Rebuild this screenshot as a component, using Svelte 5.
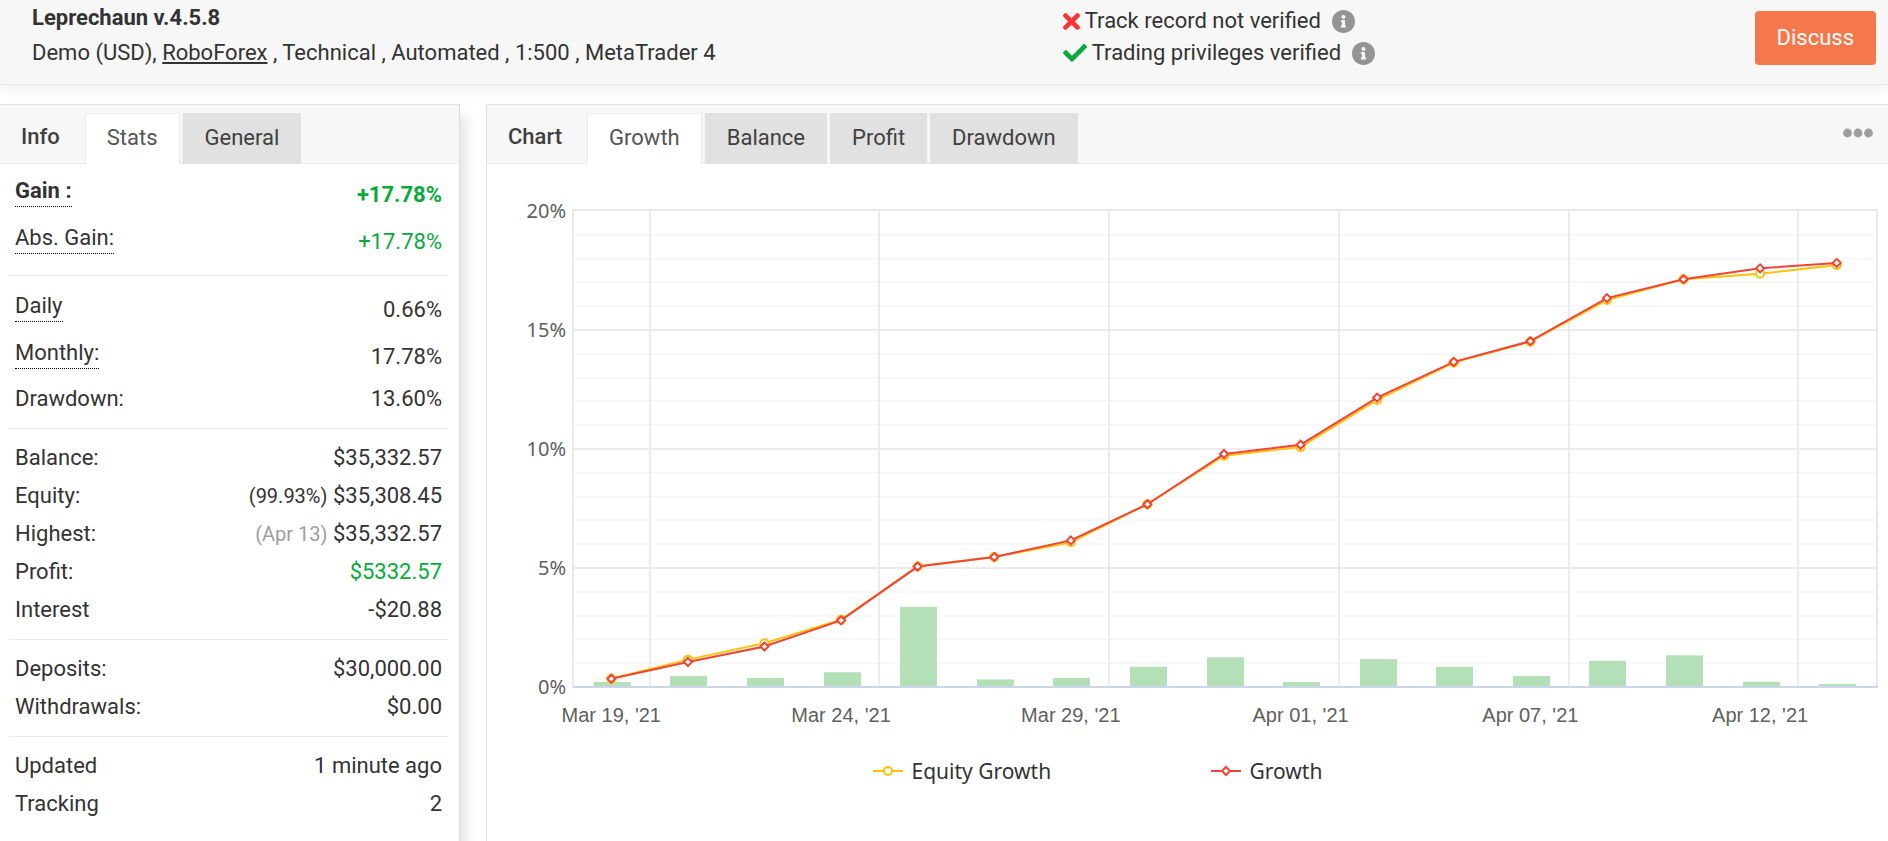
<script>
  const infoTabs = ['Stats', 'General'];
  const chartTabs = ['Growth', 'Balance', 'Profit', 'Drawdown'];
  let infoTab = $state('Stats');
  let chartTab = $state('Growth');

  const groups = [
    [
      { label: 'Gain :', value: '+17.78%', tip: true, strong: true, good: true },
      { label: 'Abs. Gain:', value: '+17.78%', tip: true, good: true }
    ],
    [
      { label: 'Daily', value: '0.66%', tip: true },
      { label: 'Monthly:', value: '17.78%', tip: true },
      { label: 'Drawdown:', value: '13.60%' }
    ],
    [
      { label: 'Balance:', value: '$35,332.57' },
      { label: 'Equity:', value: '$35,308.45', note: '(99.93%)' },
      { label: 'Highest:', value: '$35,332.57', note: '(Apr 13)', muted: true },
      { label: 'Profit:', value: '$5332.57', good: true },
      { label: 'Interest', value: '-$20.88' }
    ],
    [
      { label: 'Deposits:', value: '$30,000.00' },
      { label: 'Withdrawals:', value: '$0.00' }
    ],
    [
      { label: 'Updated', value: '1 minute ago' },
      { label: 'Tracking', value: '2' }
    ]
  ];

  const growth = [0.35, 1.05, 1.7, 2.8, 5.06, 5.46, 6.16, 7.68, 9.79, 10.18, 12.16, 13.66, 14.53, 16.34, 17.13, 17.59, 17.82];
  const equity = [0.35, 1.15, 1.84, 2.83, 5.06, 5.46, 6.08, 7.68, 9.72, 10.08, 12.06, 13.63, 14.51, 16.26, 17.13, 17.36, 17.73];
  const daily = [0.21, 0.46, 0.38, 0.62, 3.37, 0.32, 0.38, 0.85, 1.25, 0.21, 1.17, 0.85, 0.46, 1.1, 1.33, 0.22, 0.13];
  const dates = ["Mar 19, '21", "Mar 24, '21", "Mar 29, '21", "Apr 01, '21", "Apr 07, '21", "Apr 12, '21"];

  const left = 86;
  const top = 46;
  const bottom = 523;
  const unit = 23.8;
  const barWidth = 37;

  let width = $state(1401);
  let right = $derived(width - 11);
  let step = $derived((right - left - 2) / growth.length);

  const y = (v) => bottom - v * unit;
  const line = (values, s) => values.map((v, i) => `${left + s * (i + 0.5)},${y(v)}`).join(' ');
  const minor = Array.from({ length: 20 }, (_, i) => i).filter((i) => i % 5 !== 0);
</script>

{#snippet info(label)}
  <button class="info" aria-label={label}>
    <svg viewBox="8 8 496 496" width="23" height="23" fill="#949494"><path d="M256 8C119.043 8 8 119.083 8 256c0 136.997 111.043 248 248 248s248-111.003 248-248C504 119.083 392.957 8 256 8zm0 110c23.196 0 42 18.804 42 42s-18.804 42-42 42-42-18.804-42-42 18.804-42 42-42zm56 254c0 6.627-5.373 12-12 12h-88c-6.627 0-12-5.373-12-12v-24c0-6.627 5.373-12 12-12h12v-64h-12c-6.627 0-12-5.373-12-12v-24c0-6.627 5.373-12 12-12h64c6.627 0 12 5.373 12 12v100h12c6.627 0 12 5.373 12 12v24z" /></svg>
  </button>
{/snippet}

<div class="page">
  <header>
    <div class="account">
      <h1>Leprechaun v.4.5.8</h1>
      <p>Demo (USD), <a href="#roboforex">RoboForex</a> , Technical , Automated , 1:500 , MetaTrader 4</p>
    </div>
    <ul class="checks">
      <li>
        <svg viewBox="0 80 352 352" width="17" height="17" fill="#ff3232"><path d="M242.72 256l100.07-100.07c12.28-12.28 12.28-32.19 0-44.48l-22.24-22.24c-12.28-12.28-32.19-12.28-44.48 0L176 189.28 75.93 89.21c-12.28-12.28-32.19-12.28-44.48 0L9.21 111.45c-12.28 12.28-12.28 32.19 0 44.48L109.28 256 9.21 356.07c-12.28 12.28-12.28 32.19 0 44.48l22.24 22.24c12.28 12.28 32.2 12.28 44.48 0L176 322.72l100.07 100.07c12.28 12.28 32.2 12.28 44.48 0l22.24-22.24c12.28-12.28 12.28-32.19 0-44.48L242.72 256z" /></svg>
        <span>Track record not verified</span>
        {@render info('About track record')}
      </li>
      <li>
        <svg viewBox="0 64 512 384" width="24" height="18" fill="#07ab3c"><path d="M173.898 439.404l-166.4-166.4c-9.997-9.997-9.997-26.206 0-36.204l36.203-36.204c9.997-9.998 26.207-9.998 36.204 0L192 312.69 432.095 72.596c9.997-9.997 26.207-9.997 36.204 0l36.203 36.204c9.997 9.997 9.997 26.206 0 36.204l-294.4 294.401c-9.998 9.997-26.207 9.997-36.204-.001z" /></svg>
        <span>Trading privileges verified</span>
        {@render info('About trading privileges')}
      </li>
    </ul>
    <button class="discuss">Discuss</button>
  </header>

  <main>
    <section class="panel stats">
      <div class="tabs">
        <h2>Info</h2>
        {#each infoTabs as t}
          <button class="tab" class:active={infoTab === t} onclick={() => (infoTab = t)}>{t}</button>
        {/each}
      </div>
      <div class="groups">
        {#each groups as rows}
          <table>
            <tbody>
              {#each rows as r}
                <tr class:tip={r.tip} class:strong={r.strong}>
                  <th scope="row"><span>{r.label}</span></th>
                  <td class:good={r.good}>
                    {#if r.note}<small class:muted={r.muted}>{r.note}</small>{' '}{/if}{r.value}
                  </td>
                </tr>
              {/each}
            </tbody>
          </table>
        {/each}
      </div>
    </section>

    <section class="panel chart">
      <div class="tabs">
        <h2>Chart</h2>
        {#each chartTabs as t}
          <button class="tab" class:active={chartTab === t} onclick={() => (chartTab = t)}>{t}</button>
        {/each}
        <button class="more" aria-label="More options">
          <svg viewBox="0 0 30 10" width="30" height="10" fill="#9e9e9e">
            <circle cx="4.5" cy="5" r="4.4" /><circle cx="15" cy="5" r="4.4" /><circle cx="25.5" cy="5" r="4.4" />
          </svg>
        </button>
      </div>

      <div class="plot" bind:clientWidth={width}>
        <svg {width} height="575" role="img" aria-label="Growth chart">
          {#each minor as m}
            <line x1={left} x2={right} y1={Math.round(y(m))} y2={Math.round(y(m))} stroke="#f8f8f8" stroke-width="2" />
          {/each}
          {#each [5, 10, 15] as m}
            <line x1={left} x2={right} y1={Math.round(y(m))} y2={Math.round(y(m))} stroke="#ececec" stroke-width="2" />
          {/each}
          {#each dates as _, i}
            <line x1={Math.round(left + step * (1 + i * 3))} x2={Math.round(left + step * (1 + i * 3))} y1={top} y2={bottom} stroke="#ececec" stroke-width="2" />
          {/each}
          <path d="M{left} {bottom}V{top}H{right}V{bottom}" fill="none" stroke="#e9e9e9" stroke-width="2" />
          {#each daily as v, i}
            <rect x={Math.round(left + 1 + step * (i + 0.5) - barWidth / 2)} y={y(v)} width={barWidth} height={v * unit} fill="#b3e0b6" />
          {/each}
          <line x1={left} x2={right + 1} y1={bottom} y2={bottom} stroke="#ccd6eb" stroke-width="2" />

          <polyline points={line(equity, step)} fill="none" stroke="#ffc107" stroke-width="2" />
          {#each equity as v, i}
            <circle cx={left + step * (i + 0.5)} cy={y(v)} r="4" fill="#fff" stroke="#ffc107" stroke-width="2" />
          {/each}
          <polyline points={line(growth, step)} fill="none" stroke="#f04438" stroke-width="2" />
          {#each growth as v, i}
            <path d="M{left + step * (i + 0.5)} {y(v) - 4}l4 4l-4 4l-4 -4z" fill="#fff" stroke="#f04438" stroke-width="2" />
          {/each}

          {#each [0, 5, 10, 15, 20] as v}
            <text class="percent" x={left - 7} y={y(v) + 7} text-anchor="end">{v}%</text>
          {/each}
          {#each dates as d, i}
            <text class="date" x={left + step * (i * 3 + 0.5)} y="558" text-anchor="middle">{d}</text>
          {/each}
        </svg>
      </div>

      <div class="legend">
        <button>
          <svg viewBox="0 0 30 12" width="30" height="12">
            <path d="M0 6H30" stroke="#ffc107" stroke-width="2" />
            <circle cx="15" cy="6" r="4" fill="#fff" stroke="#ffc107" stroke-width="2" />
          </svg>
          Equity Growth
        </button>
        <button>
          <svg viewBox="0 0 30 12" width="30" height="12">
            <path d="M0 6H30" stroke="#f04438" stroke-width="2" />
            <path d="M15 2l4 4l-4 4l-4 -4z" fill="#fff" stroke="#f04438" stroke-width="2" />
          </svg>
          Growth
        </button>
      </div>
    </section>
  </main>
</div>

<style>
  :global(body) {
    background: #fff;
  }
  .page {
    display: flex;
    flex-direction: column;
    min-height: 100vh;
    font: 22px/26px Roboto, sans-serif;
    color: #333;
  }
  h1, h2, p, ul {
    margin: 0;
    padding: 0;
    font-size: 22px;
  }
  button {
    border: 0;
    padding: 0;
    background: none;
    font: inherit;
    color: inherit;
    cursor: pointer;
  }
  svg {
    display: block;
    flex: none;
  }
  header {
    display: grid;
    grid-template-columns: 55.9% 1fr auto;
    align-items: start;
    min-height: 84px;
    padding: 0 12px 0 32px;
    border-bottom: 1px solid #e9e9e9;
    background: #f7f7f7;
    box-shadow: 0 6px 10px rgba(0, 0, 0, 0.05);
  }
  .account {
    line-height: 35px;
  }
  h1 {
    font-weight: 700;
  }
  a {
    color: inherit;
    text-decoration: underline;
  }
  .checks {
    padding-top: 5px;
    list-style: none;
  }
  .checks li {
    display: flex;
    align-items: center;
    gap: 5px;
    height: 32px;
  }
  .info {
    margin-left: 6px;
  }
  .discuss {
    height: 54px;
    margin-top: 11px;
    padding: 0 22px;
    border-radius: 4px;
    background: #f4784b;
    color: #fff;
  }
  main {
    display: grid;
    flex: 1;
    grid-template-columns: 460px minmax(0, 1fr);
    gap: 26px;
    margin-top: 19px;
  }
  .panel {
    border-top: 1px solid #e4e4e4;
    background: #fff;
  }
  .stats {
    border-right: 1px solid #dcdce0;
    box-shadow: 6px 12px 10px rgba(40, 30, 60, 0.12);
  }
  .chart {
    border-left: 1px solid #e4e4e4;
  }
  .tabs {
    display: flex;
    align-items: flex-end;
    gap: 3px;
    height: 58px;
    border-bottom: 1px solid #ebebeb;
    background: #f7f7f7;
    color: #404040;
  }
  h2 {
    padding: 0 22px 3px 21px;
    font-weight: 500;
    line-height: 46px;
  }
  .tab {
    margin-bottom: -1px;
    padding: 1px 21px 3px;
    border: 1px solid #e1e1e1;
    border-bottom: 0;
    background: #e1e1e1;
    line-height: 46px;
  }
  .tab.active {
    border-color: #ebebeb;
    background: #fff;
    color: #555;
  }
  .more {
    align-self: center;
    margin: 0 15px 2px auto;
  }
  .groups {
    padding: 7px 11px 0 9px;
  }
  table {
    width: 100%;
    margin-bottom: 10px;
    border-spacing: 0;
  }
  table + table {
    padding-top: 10px;
    border-top: 1px solid #ebebeb;
  }
  tr {
    height: 38px;
  }
  tr.tip {
    height: 47px;
  }
  th, td {
    padding: 0 6px;
    font-weight: 400;
    text-align: left;
  }
  td {
    text-align: right;
  }
  .tip th {
    padding-top: 7px;
    vertical-align: top;
  }
  .tip th span {
    display: inline-block;
    padding-bottom: 2px;
    border-bottom: 1px dotted #000;
  }
  .strong th, .strong td {
    font-weight: 700;
  }
  .good {
    color: #07ab3c;
  }
  small {
    font-size: 20px;
  }
  .muted {
    color: #9e9e9e;
  }
  .plot {
    overflow: hidden;
  }
  .percent {
    fill: #606060;
    font: 20px "Noto Sans", sans-serif;
  }
  .date {
    fill: #606060;
    font: 20px "Liberation Sans", sans-serif;
  }
  .legend {
    display: flex;
    justify-content: center;
    padding: 18px 0 24px 46px;
  }
  .legend button {
    display: flex;
    align-items: center;
    gap: 9px;
    width: 338px;
    font: 21px/28px "Noto Sans", sans-serif;
  }
</style>
